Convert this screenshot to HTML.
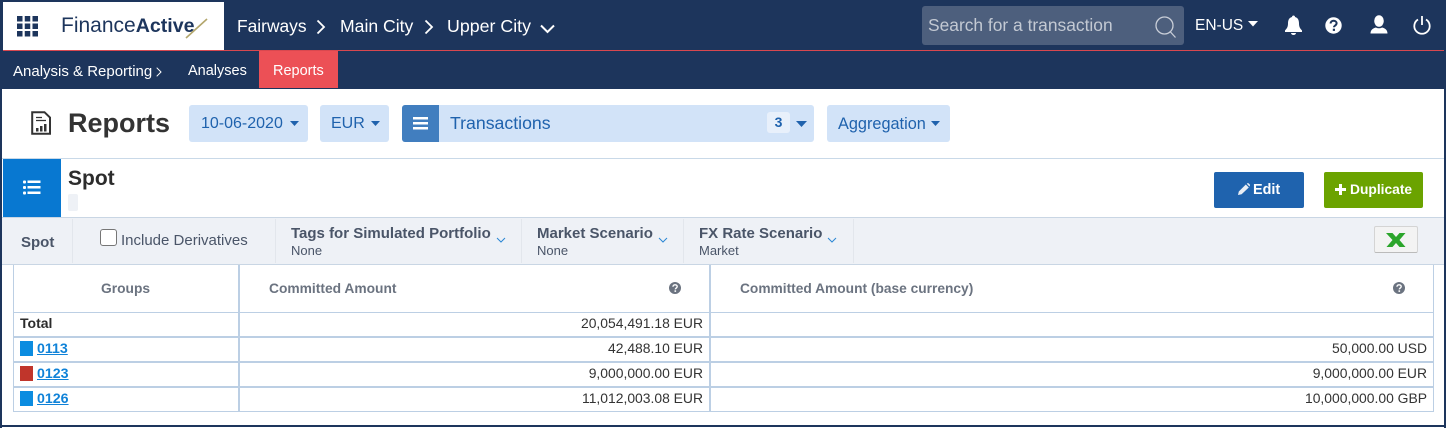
<!DOCTYPE html>
<html><head><meta charset="utf-8"><style>
html,body{margin:0;padding:0;background:#fff}
body{width:1446px;height:428px;position:relative;overflow:hidden;font-family:"Liberation Sans",Arial,sans-serif}
.a{position:absolute;white-space:nowrap}
.line{position:absolute;background:#bccfe4}
svg{position:absolute;overflow:visible}
.num{position:absolute;white-space:nowrap;font-size:13.9px;color:#333;text-align:right;line-height:24px}
.lnk{position:absolute;font-size:14.2px;font-weight:bold;color:#0f82d8;text-decoration:underline;line-height:24px}
</style></head><body>
<!-- frame -->
<div class="a" style="left:0;top:0;width:1446px;height:89px;background:#1d355c"></div>
<div class="a" style="left:3px;top:50px;width:1441px;height:1px;background:#d9484f"></div>
<div class="a" style="left:3px;top:2px;width:221px;height:48px;background:#fff"></div>
<div class="a" style="left:0;top:0;width:2px;height:428px;background:#1d355c"></div>
<div class="a" style="left:1444px;top:0;width:2px;height:428px;background:#1d355c"></div>
<div class="a" style="left:0;top:425px;width:1446px;height:2px;background:#1d355c"></div>

<!-- grid icon -->
<svg style="left:17px;top:16px" width="21" height="21" fill="#1d355c">
<rect x="0" y="0" width="5.500" height="5.500"/><rect x="7.750" y="0" width="5.500" height="5.500"/><rect x="15.500" y="0" width="5.500" height="5.500"/>
<rect x="0" y="7.500" width="5.500" height="5.500"/><rect x="7.750" y="7.500" width="5.500" height="5.500"/><rect x="15.500" y="7.500" width="5.500" height="5.500"/>
<rect x="0" y="15" width="5.500" height="5.500"/><rect x="7.750" y="15" width="5.500" height="5.500"/><rect x="15.500" y="15" width="5.500" height="5.500"/></svg>
<div class="a" style="left:61px;top:13px;font-size:21px;line-height:26px;color:#1d355c">Finance<span style="font-weight:bold;font-size:19.600px">Active</span></div>
<svg style="left:185px;top:18px" width="24" height="22"><path d="M1 20L22 1" stroke="#b3a66c" stroke-width="1.600"/></svg>

<!-- breadcrumb -->
<div class="a" style="left:237px;top:14px;font-size:17.400px;line-height:24px;color:#fff">Fairways</div>
<svg style="left:316px;top:19px" width="10" height="16" fill="none" stroke="#fff" stroke-width="1.800"><path d="M1.500 1.500L8 8L1.500 14.500"/></svg>
<div class="a" style="left:340px;top:14px;font-size:17.600px;line-height:24px;color:#fff">Main City</div>
<svg style="left:424px;top:19px" width="10" height="16" fill="none" stroke="#fff" stroke-width="1.800"><path d="M1.500 1.500L8 8L1.500 14.500"/></svg>
<div class="a" style="left:447px;top:14px;font-size:17.800px;line-height:24px;color:#fff">Upper City</div>
<svg style="left:540px;top:24px" width="15" height="10" fill="none" stroke="#fff" stroke-width="2"><path d="M1 1.500L7.500 8L14 1.500"/></svg>

<!-- search -->
<div class="a" style="left:922px;top:6px;width:262px;height:39px;background:#4d5f7d;border-radius:3px"></div>
<div class="a" style="left:928px;top:13px;font-size:17.400px;line-height:24px;color:#c3c9d3">Search for a transaction</div>
<svg style="left:1155px;top:15px" width="24" height="24" fill="none" stroke="#c9ced8" stroke-width="1.300"><circle cx="9.500" cy="10.500" r="8.500"/><path d="M15.500 17L20.500 22.500"/></svg>
<div class="a" style="left:1195px;top:16px;font-size:15.500px;line-height:20px;color:#fff">EN-US</div>
<svg style="left:1248px;top:21px" width="10" height="6" fill="#fff"><path d="M0 0H10L5 5.500Z"/></svg>
<!-- bell -->
<svg style="left:1284px;top:15px" width="19" height="20" fill="#fff"><path d="M9.500 0.500c1 0 1.500.7 1.500 1.500c3 .8 4 3.200 4 6.500c0 3.500 1.200 5 3 7v1.500H1V15.500c1.800-2 3-3.500 3-7c0-3.300 1-5.700 4-6.500c0-.8.5-1.500 1.500-1.500Z"/><path d="M7 18h5c0 1-1 2-2.500 2S7 19 7 18Z"/></svg>
<!-- help -->
<svg style="left:1325px;top:17px" width="17" height="17"><circle cx="8.500" cy="8.500" r="8.200" fill="#fff"/><path d="M5.600 6.500c0-1.700 1.300-2.700 3-2.700c1.700 0 3 1 3 2.500c0 2.200-2.700 2.200-2.700 4" fill="none" stroke="#1d355c" stroke-width="2"/><rect x="7.800" y="11.700" width="2.200" height="2.200" fill="#1d355c"/></svg>
<!-- user -->
<svg style="left:1370px;top:15px" width="18" height="19" fill="#fff"><ellipse cx="9" cy="6" rx="4.800" ry="5.800"/><path d="M0.500 18.500C0.500 14.500 3.500 13 6 12.500C7.500 13.500 10.500 13.500 12 12.500C14.500 13 17.500 14.500 17.500 18.500Z"/></svg>
<!-- power -->
<svg style="left:1413px;top:15px" width="18" height="20" fill="none" stroke="#fff" stroke-width="1.800"><path d="M5 4.500A7.700 7.700 0 1 0 13 4.500"/><path d="M9 1V10"/></svg>

<!-- subnav -->
<div class="a" style="left:13px;top:63px;font-size:15px;line-height:18px;color:#fff">Analysis &amp; Reporting</div>
<svg style="left:156px;top:67px" width="6" height="10" fill="none" stroke="#fff" stroke-width="1"><path d="M.7 .7L5 5L.7 9.300"/></svg>
<div class="a" style="left:188px;top:62px;font-size:14.500px;line-height:18px;color:#fff">Analyses</div>
<div class="a" style="left:259px;top:51px;width:79px;height:37px;background:#ec5056"></div>
<div class="a" style="left:273px;top:62px;font-size:14.500px;line-height:18px;color:#fff">Reports</div>

<!-- page title -->
<svg style="left:31px;top:111px" width="20" height="24" fill="none" stroke="#333"><path d="M1.200 1.200H13.500L19 6.500V22.800H1.200Z" stroke-width="2"/><path d="M5 6.500H11M5 9.500H15" stroke-width="1.200"/><rect x="5" y="17" width="2.500" height="3.500" fill="#333" stroke="none"/><rect x="9" y="15" width="2.500" height="5.500" fill="#333" stroke="none"/><rect x="13" y="13" width="2.500" height="7.500" fill="#333" stroke="none"/></svg>
<div class="a" style="left:68px;top:106px;font-size:27px;line-height:34px;font-weight:bold;color:#333">Reports</div>

<div class="a" style="left:189px;top:105px;width:119px;height:37px;background:#d2e3f8;border-radius:3px"></div>
<div class="a" style="left:201px;top:114px;font-size:16px;line-height:20px;color:#1f62ad">10-06-2020</div>
<svg style="left:290px;top:121px" width="9" height="5" fill="#1f62ad"><path d="M0 0H9L4.500 5Z"/></svg>
<div class="a" style="left:320px;top:105px;width:69px;height:37px;background:#d2e3f8;border-radius:3px"></div>
<div class="a" style="left:331px;top:114px;font-size:16px;line-height:20px;color:#1f62ad">EUR</div>
<svg style="left:371px;top:121px" width="9" height="5" fill="#1f62ad"><path d="M0 0H9L4.500 5Z"/></svg>

<div class="a" style="left:402px;top:105px;width:412px;height:37px;background:#d2e3f8;border-radius:3px"></div>
<div class="a" style="left:402px;top:105px;width:37px;height:37px;background:#417ebf;border-radius:3px 0 0 3px"></div>
<svg style="left:413px;top:117px" width="15" height="13" fill="#fff"><rect width="15" height="2.500" y="0"/><rect width="15" height="2.500" y="5"/><rect width="15" height="2.500" y="10"/></svg>
<div class="a" style="left:450px;top:112px;font-size:17.700px;line-height:22px;color:#1f62ad">Transactions</div>
<div class="a" style="left:767px;top:112px;width:23px;height:21px;background:#e8f0fb;border-radius:3px;text-align:center;font-size:14px;line-height:21px;font-weight:bold;color:#1f62ad">3</div>
<svg style="left:796px;top:121px" width="11" height="6" fill="#1f62ad"><path d="M0 0H11L5.500 6Z"/></svg>

<div class="a" style="left:827px;top:105px;width:123px;height:37px;background:#d2e3f8;border-radius:3px"></div>
<div class="a" style="left:838px;top:114px;font-size:16.300px;line-height:20px;color:#1f62ad">Aggregation</div>
<svg style="left:931px;top:121px" width="9" height="5" fill="#1f62ad"><path d="M0 0H9L4.500 5Z"/></svg>

<!-- section header -->
<div class="a" style="left:2px;top:158px;width:1442px;height:1px;background:#c9d9e8"></div>
<div class="a" style="left:3px;top:159px;width:58px;height:58px;background:#0878d1"></div>
<svg style="left:23px;top:180px" width="18" height="15" fill="#fff"><rect x="0" y="0.500" width="3" height="3" rx="1"/><rect x="4.500" y="0.500" width="13" height="2.500"/><rect x="0" y="6" width="3" height="3" rx="1"/><rect x="4.500" y="6" width="13" height="2.500"/><rect x="0" y="11.500" width="3" height="3" rx="1"/><rect x="4.500" y="11.500" width="13" height="2.500"/></svg>
<div class="a" style="left:68px;top:166px;font-size:21px;line-height:26px;font-weight:bold;color:#2c2c2c">Spot</div>
<div class="a" style="left:68px;top:194px;width:10px;height:17px;background:#eef1f6;border-radius:2px"></div>

<div class="a" style="left:1214px;top:172px;width:90px;height:36px;background:#1f63ae;border-radius:2px"></div>
<svg style="left:1238px;top:183px" width="12" height="12" fill="#e9eef5"><path d="M0 12L.8 8.500L7.800 1.500L10.800 4.500L3.600 11.300Z"/><path d="M8.800 .7C9.500 0 10.200 0 10.800 .5L11.700 1.400C12.200 2 12 2.700 11.500 3.500Z"/></svg>
<div class="a" style="left:1253px;top:181px;font-size:14.400px;line-height:18px;font-weight:bold;color:#fff">Edit</div>
<div class="a" style="left:1324px;top:172px;width:99px;height:36px;background:#6ba300;border-radius:2px"></div>
<svg style="left:1335px;top:184px" width="11" height="11" fill="#fff"><rect x="4" y="0" width="3" height="11"/><rect x="0" y="4" width="11" height="3"/></svg>
<div class="a" style="left:1350px;top:181px;font-size:13.800px;line-height:18px;font-weight:bold;color:#fff">Duplicate</div>

<!-- filter bar -->
<div class="a" style="left:2px;top:217px;width:1442px;height:48px;background:#eef1f6;border-top:1px solid #c9d6e4;border-bottom:1px solid #c9d6e4;box-sizing:border-box"></div>
<div class="a" style="left:72px;top:219px;width:1px;height:44px;background:#e2e6ec"></div>
<div class="a" style="left:275px;top:219px;width:1px;height:44px;background:#e2e6ec"></div>
<div class="a" style="left:521px;top:219px;width:1px;height:44px;background:#e2e6ec"></div>
<div class="a" style="left:683px;top:219px;width:1px;height:44px;background:#e2e6ec"></div>
<div class="a" style="left:853px;top:219px;width:1px;height:44px;background:#e2e6ec"></div>
<div class="a" style="left:21px;top:233px;font-size:15px;line-height:19px;font-weight:bold;color:#4a5568">Spot</div>
<div class="a" style="left:100px;top:229px;width:15px;height:15px;background:#fff;border:1px solid #767676;border-radius:3px"></div>
<div class="a" style="left:121px;top:232px;font-size:15px;line-height:18px;color:#4a5568">Include Derivatives</div>
<div class="a" style="left:291px;top:225px;font-size:15px;line-height:18px;font-weight:bold;color:#4a5568">Tags for Simulated Portfolio</div>
<div class="a" style="left:291px;top:243px;font-size:13px;line-height:16px;color:#4a5568">None</div>
<svg style="left:496px;top:237px" width="10" height="6" fill="none" stroke="#2a86d4" stroke-width="1"><path d="M1 1L5 5L9 1"/></svg>
<div class="a" style="left:537px;top:225px;font-size:15px;line-height:18px;font-weight:bold;color:#4a5568">Market Scenario</div>
<div class="a" style="left:537px;top:243px;font-size:13px;line-height:16px;color:#4a5568">None</div>
<svg style="left:658px;top:237px" width="10" height="6" fill="none" stroke="#2a86d4" stroke-width="1"><path d="M1 1L5 5L9 1"/></svg>
<div class="a" style="left:699px;top:225px;font-size:15px;line-height:18px;font-weight:bold;color:#4a5568">FX Rate Scenario</div>
<div class="a" style="left:699px;top:243px;font-size:13px;line-height:16px;color:#4a5568">Market</div>
<svg style="left:827px;top:237px" width="10" height="6" fill="none" stroke="#2a86d4" stroke-width="1"><path d="M1 1L5 5L9 1"/></svg>
<div class="a" style="left:1374px;top:226px;width:44px;height:27px;background:#f3f3f3;border:1px solid #d4d4d4;border-bottom-color:#bbb;border-radius:2px;box-sizing:border-box"></div>
<svg style="left:1386px;top:233px" width="20" height="14"><path d="M0 0H6.500L10 4L13.500 0H19.500L13.500 7L19.500 14H13.500L10 10L6.500 14H.5L6.500 7Z" fill="#2ba52b"/></svg>

<!-- table -->
<div class="line" style="left:13px;top:265px;width:1px;height:147px"></div>
<div class="line" style="left:1433px;top:265px;width:1px;height:147px"></div>
<div class="line" style="left:238px;top:265px;width:2px;height:147px"></div>
<div class="line" style="left:709px;top:265px;width:2px;height:147px"></div>
<div class="line" style="left:13px;top:312px;width:1421px;height:1px"></div>
<div class="line" style="left:13px;top:336px;width:1421px;height:2px"></div>
<div class="line" style="left:13px;top:361px;width:1421px;height:2px"></div>
<div class="line" style="left:13px;top:386px;width:1421px;height:2px"></div>
<div class="line" style="left:13px;top:411px;width:1421px;height:1px"></div>

<div class="a" style="left:101px;top:280px;font-size:13.800px;line-height:18px;font-weight:bold;color:#6b7380">Groups</div>
<div class="a" style="left:269px;top:280px;font-size:13.800px;line-height:18px;font-weight:bold;color:#6b7380">Committed Amount</div>
<div class="a" style="left:740px;top:280px;font-size:13.750px;line-height:18px;font-weight:bold;color:#6b7380">Committed Amount (base currency)</div>
<svg style="left:669px;top:282px" width="12" height="12"><circle cx="6" cy="6" r="6" fill="#6b7380"/><path d="M4 4.700c0-1.200 1-1.900 2.100-1.900c1.200 0 2.100.7 2.100 1.700c0 1.500-1.900 1.500-1.900 2.900" fill="none" stroke="#fff" stroke-width="1.400"/><rect x="5.500" y="8.300" width="1.600" height="1.600" fill="#fff"/></svg>
<svg style="left:1393px;top:282px" width="12" height="12"><circle cx="6" cy="6" r="6" fill="#6b7380"/><path d="M4 4.700c0-1.200 1-1.900 2.100-1.900c1.200 0 2.100.7 2.100 1.700c0 1.500-1.900 1.500-1.900 2.900" fill="none" stroke="#fff" stroke-width="1.400"/><rect x="5.500" y="8.300" width="1.600" height="1.600" fill="#fff"/></svg>

<div class="a" style="left:20px;top:311px;font-size:14px;line-height:24px;font-weight:bold;color:#2c2c2c">Total</div>
<div class="num" style="right:743px;top:311px">20,054,491.18 EUR</div>

<div class="a" style="left:20px;top:341px;width:13px;height:15px;background:#0b8ce0"></div>
<div class="lnk" style="left:37px;top:337px">0113</div>
<div class="num" style="right:743px;top:336px">42,488.10 EUR</div>
<div class="num" style="right:19px;top:336px">50,000.00 USD</div>

<div class="a" style="left:20px;top:366px;width:13px;height:15px;background:#c0352b"></div>
<div class="lnk" style="left:37px;top:362px">0123</div>
<div class="num" style="right:743px;top:361px">9,000,000.00 EUR</div>
<div class="num" style="right:19px;top:361px">9,000,000.00 EUR</div>

<div class="a" style="left:20px;top:391px;width:13px;height:15px;background:#0b8ce0"></div>
<div class="lnk" style="left:37px;top:387px">0126</div>
<div class="num" style="right:743px;top:386px">11,012,003.08 EUR</div>
<div class="num" style="right:19px;top:386px">10,000,000.00 GBP</div>
</body></html>
